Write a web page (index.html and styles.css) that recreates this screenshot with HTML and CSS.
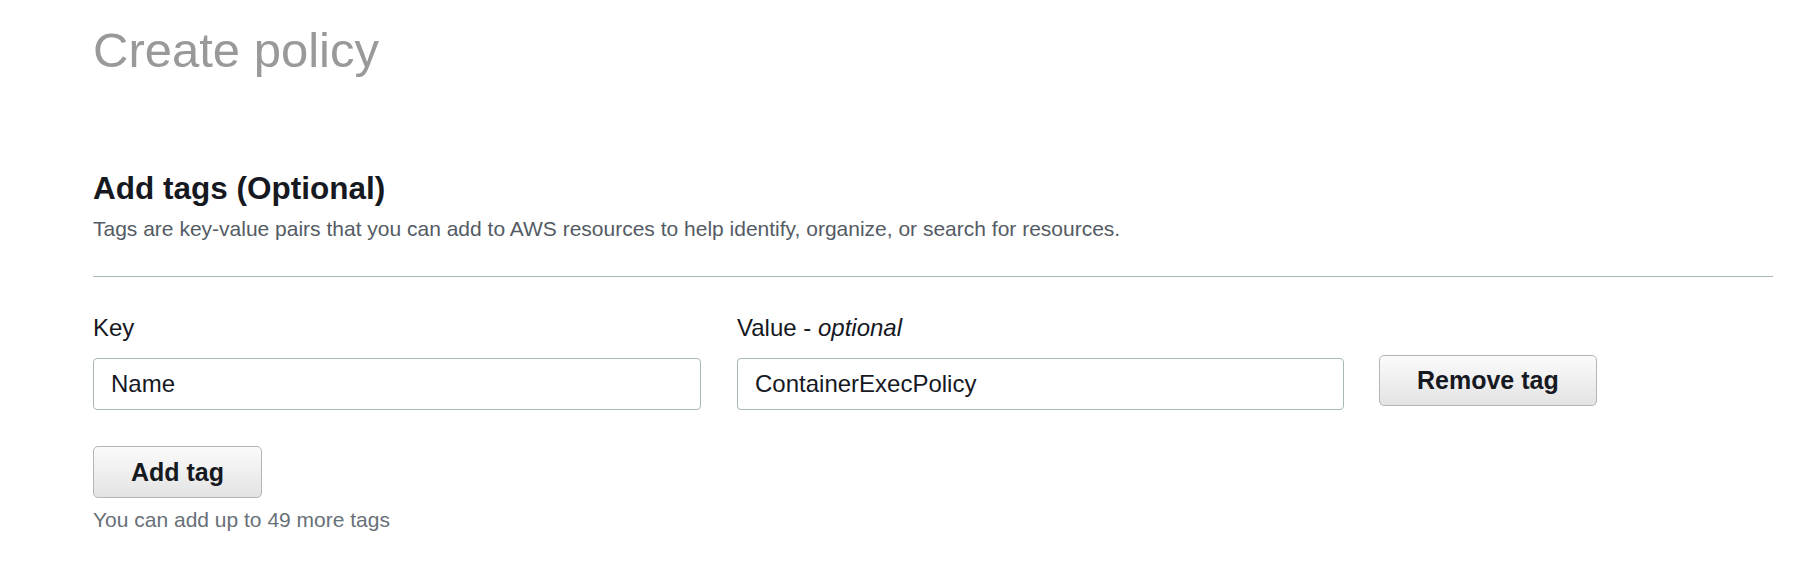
FILE: index.html
```html
<!DOCTYPE html>
<html lang="en">
<head>
<meta charset="utf-8">
<title>Create policy</title>
<link rel="stylesheet" href="styles.css">
</head>
<body>
<div class="page">
  <h1 class="title">Create policy</h1>
  <section class="tags">
    <h2 class="tags-heading">Add tags (Optional)</h2>
    <p class="tags-desc">Tags are key-value pairs that you can add to AWS resources to help identify, organize, or search for resources.</p>
    <div class="divider"></div>
    <div class="tag-row">
      <div class="field field-key">
        <label class="field-label">Key</label>
        <div class="input">Name</div>
      </div>
      <div class="field field-value">
        <label class="field-label">Value - <i>optional</i></label>
        <div class="input">ContainerExecPolicy</div>
      </div>
      <div class="row-action">
        <button class="btn">Remove tag</button>
      </div>
    </div>
    <button class="btn btn-add">Add tag</button>
    <p class="tags-help">You can add up to 49 more tags</p>
  </section>
</div>
</body>
</html>
```
FILE: styles.css
```css
html, body {
  margin: 0;
  padding: 0;
  background: #ffffff;
}
body {
  font-family: "Liberation Sans", Arial, sans-serif;
  color: #16191f;
}
.page {
  padding: 22px 38px 0 93px;
}
.title {
  margin: 0;
  font-size: 49px;
  line-height: 56px;
  font-weight: normal;
  color: #999999;
}
.tags {
  margin-top: 92px;
}
.tags-heading {
  margin: 0;
  font-size: 31.5px;
  line-height: 36px;
  font-weight: bold;
  color: #16191f;
}
.tags-desc {
  margin: 9px 0 0;
  font-size: 21px;
  line-height: 28px;
  color: #545b64;
}
.divider {
  margin-top: 33px;
  border-top: 1px solid #aab7b8;
}
.tag-row {
  display: flex;
  align-items: flex-start;
  margin-top: 36px;
}
.field {
  display: flex;
  flex-direction: column;
}
.field-key {
  width: 608px;
  margin-right: 36px;
}
.field-value {
  width: 607px;
  margin-right: 35px;
}
.field-label {
  font-size: 24px;
  line-height: 30px;
  color: #16191f;
  margin-bottom: 15px;
}
.field-label i {
  font-style: italic;
}
.input {
  box-sizing: border-box;
  height: 52px;
  border: 1px solid #aab7b8;
  border-radius: 4px;
  padding: 0 17px;
  font-size: 24px;
  line-height: 50px;
  color: #16191f;
  background: #ffffff;
}
.row-action {
  margin-top: 42px;
}
.btn {
  box-sizing: border-box;
  height: 51px;
  padding: 0 37px;
  border: 1px solid #b5b5b5;
  border-radius: 5px;
  background: linear-gradient(#fbfbfb, #e3e3e3);
  font-family: "Liberation Sans", Arial, sans-serif;
  font-size: 25px;
  font-weight: bold;
  color: #16191f;
  cursor: pointer;
}
.btn-add {
  display: block;
  height: 52px;
  margin-top: 36px;
}
.tags-help {
  margin: 8px 0 0;
  font-size: 21px;
  line-height: 28px;
  color: #687078;
}
```
